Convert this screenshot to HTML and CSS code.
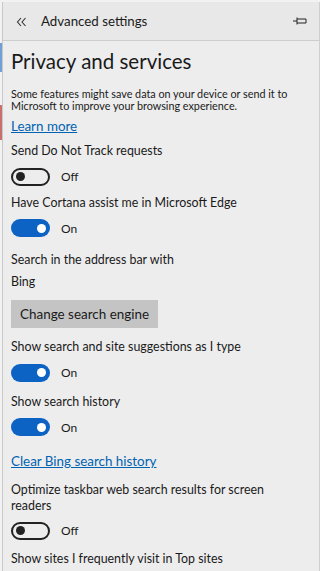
FILE: index.html
```html
<!DOCTYPE html>
<html>
<head>
<meta charset="utf-8">
<link rel="stylesheet" href="styles.css">
</head>
<body>
<div class="frame">
  <div class="strip">
    <div class="seg gap1"></div>
    <div class="seg blue"></div>
    <div class="seg gap2"></div>
    <div class="seg red"></div>
  </div>
  <div class="panel">
    <div class="header">
      <svg class="back" width="11" height="10" viewBox="0 0 11 10">
        <path d="M5 1 L1.5 5 L5 9 M9.5 1 L6 5 L9.5 9" fill="none" stroke="#333" stroke-width="1.1"/>
      </svg>
      <span class="htitle">Advanced settings</span>
      <svg class="pin" width="16" height="10" viewBox="0 0 16 10">
        <path d="M1 5 H5 M5 1.5 V8.5 M5 3 H14 V7 H5" fill="none" stroke="#222" stroke-width="1"/>
      </svg>
    </div>
    <div class="content">
      <h1 class="title">Privacy and services</h1>
      <p class="desc">Some features might save data on your device or send it to Microsoft to improve your browsing experience.</p>
      <a class="link learn">Learn more</a>

      <div class="label m6">Send Do Not Track requests</div>
      <div class="toggle-row"><span class="toggle off"><span class="knob"></span></span><span class="state">Off</span></div>

      <div class="label m7">Have Cortana assist me in Microsoft Edge</div>
      <div class="toggle-row"><span class="toggle on"><span class="knob"></span></span><span class="state">On</span></div>

      <div class="label m13">Search in the address bar with</div>
      <div class="label m4">Bing</div>
      <div class="btn">Change search engine</div>

      <div class="label m10">Show search and site suggestions as I type</div>
      <div class="toggle-row"><span class="toggle on"><span class="knob"></span></span><span class="state">On</span></div>

      <div class="label m10">Show search history</div>
      <div class="toggle-row"><span class="toggle on"><span class="knob"></span></span><span class="state">On</span></div>

      <a class="link clear">Clear Bing search history</a>

      <div class="label multi">Optimize taskbar web search results for screen readers</div>
      <div class="toggle-row"><span class="toggle off"><span class="knob"></span></span><span class="state">Off</span></div>

      <div class="label m9">Show sites I frequently visit in Top sites</div>
    </div>
  </div>
</div>
</body>
</html>
```

FILE: styles.css
```css
html, body {
  margin: 0;
  padding: 0;
  background: #eeeeee;
}
body {
  font-family: Lato, "Noto Sans", sans-serif;
  color: #1a1a1a;
  width: 320px;
  height: 571px;
  overflow: hidden;
}
.frame {
  display: flex;
  height: 571px;
  padding-top: 2px;
  box-sizing: border-box;
  background: #f2f2f2;
}
.strip {
  width: 2px;
  display: flex;
  flex-direction: column;
}
.seg.gap1 { height: 41px; }
.seg.blue { height: 29px; background: #6f9fd6; }
.seg.gap2 { height: 33px; }
.seg.red { height: 35px; background: #c9706f; }
.panel {
  flex: 1;
  border-left: 1px solid #c8c8c8;
  border-right: 1px solid #cfcfcf;
  background: #ededed;
  display: flex;
  flex-direction: column;
}
.header {
  height: 38px;
  background: #e8e8e8;
  border-bottom: 1px solid #cdcdcd;
  display: flex;
  align-items: center;
  padding: 0 11px 0 13px;
  flex-shrink: 0;
}
.back {
  margin-right: 14px;
  margin-top: 1px;
}
.htitle {
  font-size: 13.3px;
  flex: 1;
  color: #1a1a1a;
}
.content {
  padding: 0 0 0 8px;
}
.title {
  font-weight: 400;
  font-size: 20.5px;
  line-height: 26px;
  margin: 6.5px 0 0;
}
.desc {
  font-size: 10.8px;
  line-height: 12px;
  margin: 14px 0 0;
}
.link {
  display: block;
  color: #0063b1;
  text-decoration: underline;
  font-size: 13.4px;
  line-height: 20px;
}
.learn { margin-top: 4.5px; }
.label {
  font-size: 12.4px;
  line-height: 18px;
}
.m4 { margin-top: 4px; }
.m6 { margin-top: 6px; }
.m7 { margin-top: 7px; }
.m9 { margin-top: 9px; }
.m10 { margin-top: 10px; }
.m13 { margin-top: 13px; }
.toggle-row {
  display: flex;
  align-items: center;
  height: 20px;
  margin-top: 6.5px;
}
.toggle {
  width: 39px;
  height: 18px;
  box-sizing: border-box;
  border-radius: 9px;
  display: flex;
  align-items: center;
  padding: 0 4px;
}
.toggle.off {
  border: 2px solid #222;
  justify-content: flex-start;
  padding: 0 3px;
}
.toggle.on {
  background: #0c63c4;
  justify-content: flex-end;
}
.knob {
  width: 9px;
  height: 9px;
  border-radius: 50%;
}
.toggle.off .knob { background: #222; }
.toggle.on .knob { background: #fff; }
.state {
  font-size: 12px;
  margin-left: 11px;
}
.btn {
  display: inline-block;
  background: #c4c4c4;
  font-size: 13.45px;
  line-height: 28px;
  padding: 0 9px;
  margin-top: 9px;
}
.clear { margin-top: 14px; }
.multi { line-height: 16px; width: 290px; margin-top: 11px; }
```
